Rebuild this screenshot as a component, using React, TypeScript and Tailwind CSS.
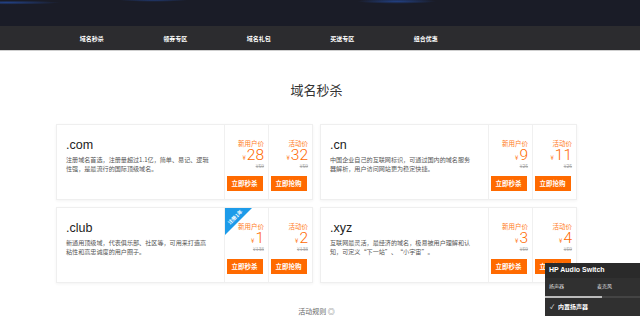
import React from "react";

const cjk = "font-['Noto_Sans_CJK_SC',sans-serif]";

const navItems = ["域名秒杀", "领券专区", "域名礼包", "买送专区", "组合优惠"];

const cards = [
  {
    tld: ".com",
    desc: "注册域名首选，注册量超过1.1亿，简单、易记、逻辑性强，是最流行的国际顶级域名。",
    p1: "28",
    p2: "32",
    orig: "59",
    ribbon: false,
  },
  {
    tld: ".cn",
    desc: "中国企业自己的互联网标识，可通过国内的域名服务器解析，用户访问网站更为稳定快捷。",
    p1: "9",
    p2: "11",
    orig: "25",
    ribbon: false,
  },
  {
    tld: ".club",
    desc: "新通用顶级域，代表俱乐部、社区等，可用来打造高粘性和高忠诚度的用户圈子。",
    p1: "1",
    p2: "2",
    orig: "138",
    ribbon: true,
  },
  {
    tld: ".xyz",
    desc: "互联网最灵活，最经济的域名，极易被用户理解和认知，可定义“下一站”、“小宇宙”。",
    p1: "3",
    p2: "4",
    orig: "69",
    ribbon: false,
  },
];

function PriceCol({
  label,
  price,
  orig,
  btn,
  ribbon,
}: {
  label: string;
  price: string;
  orig: string;
  btn: string;
  ribbon?: boolean;
}) {
  return (
    <div className="relative flex w-[44px] flex-col items-end border-l border-[#f0f0f0] pr-[4px] pt-[14px] pb-[8px]">
      {ribbon && (
        <div className="absolute left-0 top-0 h-[27px] w-[27px] bg-[#1d9be9] [clip-path:polygon(0_0,100%_0,0_100%)]">
          <span className="absolute left-[-2px] top-[6px] w-[24px] -rotate-45 text-center text-[5px] font-bold leading-[6px] text-white">
            注册1年
          </span>
        </div>
      )}
      <div className="h-[8px] text-[6.5px] leading-[8px] text-[#ff7a1a]">{label}</div>
      <div className="mt-[1px] flex h-[13px] items-end text-[#ff6a00]">
        <span className="mr-[1px] block h-[6px] text-[6px] leading-[6px]">¥</span>
        <span className="block h-[12px] font-['Roboto',sans-serif] text-[15.5px] font-light leading-[12px]">{price}</span>
      </div>
      <div className="mt-[2px] block h-[6px] text-[5px] leading-[6px] text-[#aaa] line-through">¥{orig}</div>
      <button className="mt-auto flex h-[15px] w-[36px] items-center justify-center self-center bg-[#ff6a00] text-[6.5px] font-bold text-white">
        {btn}
      </button>
    </div>
  );
}

function Card({ c }: { c: (typeof cards)[number] }) {
  return (
    <div className="flex h-[76px] w-[257px] border border-[#efefef] bg-white shadow-[0_1px_3px_rgba(0,0,0,0.05)]">
      <div className="flex-1 pl-[9px] pt-[13px]">
        <div className="font-['Liberation_Sans',sans-serif] text-[12.5px] leading-[14px] text-[#222]">{c.tld}</div>
        <p className="mt-[3px] w-[144px] text-[6.1px] leading-[9px] text-[#555]">{c.desc}</p>
      </div>
      <PriceCol label="新用户价" price={c.p1} orig={c.orig} btn="立即秒杀" ribbon={c.ribbon} />
      <PriceCol label="活动价" price={c.p2} orig={c.orig} btn="立即抢购" />
    </div>
  );
}

export default function App() {
  return (
    <div className={`relative h-[316px] w-[640px] overflow-hidden bg-white ${cjk}`}>
      <div className="h-[26px] bg-[#1a1c27] bg-[radial-gradient(ellipse_at_1%_10%,rgba(40,95,210,0.55),transparent_6%),radial-gradient(ellipse_at_24%_0%,rgba(40,95,210,0.45),transparent_5%),radial-gradient(ellipse_at_62%_5%,rgba(40,95,210,0.55),transparent_7%)]" />
      <nav className="flex h-[24px] bg-[#2c2c2f] pl-[50px]">
        {navItems.map((n) => (
          <div key={n} className="flex w-[83.5px] items-center justify-center text-[6px] font-bold text-white">
            {n}
          </div>
        ))}
      </nav>
      <div className="h-[1px] bg-[#cfcfcf]" />
      <div className="ml-[56px] w-[521px]">
        <h2 className="mt-[31px] text-center text-[13px] leading-[16px] text-[#333]">域名秒杀</h2>
        <div className="mt-[26px] grid grid-cols-[257px_257px] gap-x-[7px] gap-y-[7px]">
          {cards.map((c) => (
            <Card key={c.tld} c={c} />
          ))}
        </div>
        <div className="mt-[24px] text-center text-[7px] leading-[9px] text-[#666]">活动规则 ◎</div>
      </div>

      <div className="absolute bottom-0 right-0 h-[53px] w-[95px] bg-[#303030] font-['Liberation_Sans','Noto_Sans_CJK_SC',sans-serif] text-white">
        <div className="flex h-[15px] items-center bg-[#2a2a2a] pl-[4px] text-[7px] font-bold">HP Audio Switch</div>
        <div className="flex h-[18px] items-center pl-[4px] text-[5px] text-[#ddd]">
          <span className="w-[48px]">扬声器</span>
          <span>麦克风</span>
        </div>
        <div className="flex h-[2px]">
          <div className="w-[57px] bg-[#bbb]" />
          <div className="flex-1 bg-[#444]" />
        </div>
        <div className="flex h-[18px] items-center pl-[5px] text-[6px]">
          <span className="mr-[4px]">✓</span>
          <span className="font-bold">内置扬声器</span>
        </div>
      </div>
    </div>
  );
}
